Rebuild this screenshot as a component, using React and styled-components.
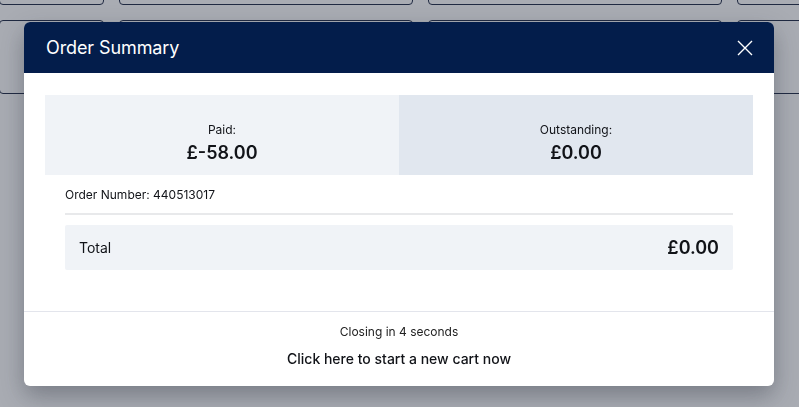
import { createGlobalStyle, styled } from 'styled-components'

const GlobalStyle = createGlobalStyle`
html, body {
    margin: 0;
    padding: 0;
}
body {
    background: #ffffff;
    font-family: Inter, "Open Sans", sans-serif;
    overflow: hidden;
}
`

const tiles = [105, 294, 294, 80]

const App = () => {
    return (
        <>
            <GlobalStyle />
            <Page>
                <Row $top={-69}>
                    {tiles.map((w, i) => <Tile key={i} style={{ width: w }} />)}
                </Row>
                <Row>
                    {tiles.map((w, i) => <Tile key={i} style={{ width: w }} />)}
                </Row>
            </Page>
            <Overlay />
            <Modal>
                <Header>
                    <Title>Order Summary</Title>
                    <Close aria-label="Close">
                        <svg width="16" height="16" viewBox="0 0 16 16">
                            <path d="M1 1L15 15M15 1L1 15" stroke="#ffffff" strokeWidth="1.4" fill="none" />
                        </svg>
                    </Close>
                </Header>
                <Body>
                    <Stats>
                        <Stat $tone="#f0f3f7">
                            <StatLabel>Paid:</StatLabel>
                            <StatValue>£-58.00</StatValue>
                        </Stat>
                        <Stat $tone="#e1e7ef">
                            <StatLabel>Outstanding:</StatLabel>
                            <StatValue>£0.00</StatValue>
                        </Stat>
                    </Stats>
                    <Details>
                        <OrderNumber>Order Number: 440513017</OrderNumber>
                        <Divider />
                        <TotalRow>
                            <TotalLabel>Total</TotalLabel>
                            <TotalValue>£0.00</TotalValue>
                        </TotalRow>
                    </Details>
                </Body>
                <Footer>
                    <Countdown>Closing in 4 seconds</Countdown>
                    <NewCart>Click here to start a new cart now</NewCart>
                </Footer>
            </Modal>
        </>
    )
}

export default App

const Page = styled.div`
display: flex;
flex-direction: column;
gap: 15px;
height: 407px;
`

const Row = styled.div`
display: flex;
gap: 15px;
height: 74px;
margin-top: ${p => (p.$top ? `${p.$top}px` : '0')};
margin-left: -1px;
`

const Tile = styled.div`
flex-shrink: 0;
box-sizing: border-box;
height: 100%;
border: 1.5px solid #0c1836;
border-radius: 4px;
`

const Overlay = styled.div`
position: fixed;
inset: 0;
background: rgba(60, 66, 82, 0.44);
`

const Modal = styled.div`
position: fixed;
top: 22px;
left: 24px;
width: 750px;
height: 364px;
display: flex;
flex-direction: column;
background: #ffffff;
border-radius: 6px;
overflow: hidden;
box-shadow: 0 10px 24px rgba(30, 34, 50, 0.35);
`

const Header = styled.div`
display: flex;
align-items: center;
justify-content: space-between;
height: 51px;
padding: 0 22px;
background: #031d4b;
flex-shrink: 0;
`

const Title = styled.h2`
margin: 0;
font-size: 18px;
font-weight: 400;
color: #ffffff;
letter-spacing: -0.1px;
`

const Close = styled.button`
display: flex;
padding: 0;
margin-right: -1px;
border: none;
background: none;
cursor: pointer;
`

const Body = styled.div`
flex: 1;
padding: 22px 21px 0;
`

const Stats = styled.div`
display: grid;
grid-template-columns: 1fr 1fr;
height: 80px;
`

const Stat = styled.div`
display: flex;
flex-direction: column;
align-items: center;
justify-content: center;
padding-top: 16px;
box-sizing: border-box;
background: ${p => p.$tone};
color: #111318;
`

const StatLabel = styled.div`
font-size: 12px;
line-height: 16px;
`

const StatValue = styled.div`
margin-top: 3px;
font-size: 18px;
font-weight: 600;
line-height: 24px;
`

const Details = styled.div`
padding: 0 20px;
`

const OrderNumber = styled.div`
font-size: 12px;
line-height: 16px;
color: #111318;
padding: 12px 0 0;
`

const Divider = styled.div`
height: 2px;
background: #e8e9eb;
margin-top: 10px;
`

const TotalRow = styled.div`
display: flex;
align-items: center;
justify-content: space-between;
height: 45px;
margin-top: 10px;
padding: 0 14px;
background: #f0f3f7;
border-radius: 2px;
`

const TotalLabel = styled.div`
font-size: 14px;
color: #111318;
`

const TotalValue = styled.div`
font-size: 18px;
font-weight: 600;
color: #111318;
`

const Footer = styled.div`
display: flex;
flex-direction: column;
align-items: center;
height: 75px;
box-sizing: border-box;
border-top: 1px solid #e3e5ec;
padding-top: 12px;
flex-shrink: 0;
`

const Countdown = styled.div`
font-size: 12px;
line-height: 16px;
color: #222;
`

const NewCart = styled.div`
margin-top: 9px;
font-size: 14px;
font-weight: 500;
line-height: 20px;
color: #111318;
cursor: pointer;
`
